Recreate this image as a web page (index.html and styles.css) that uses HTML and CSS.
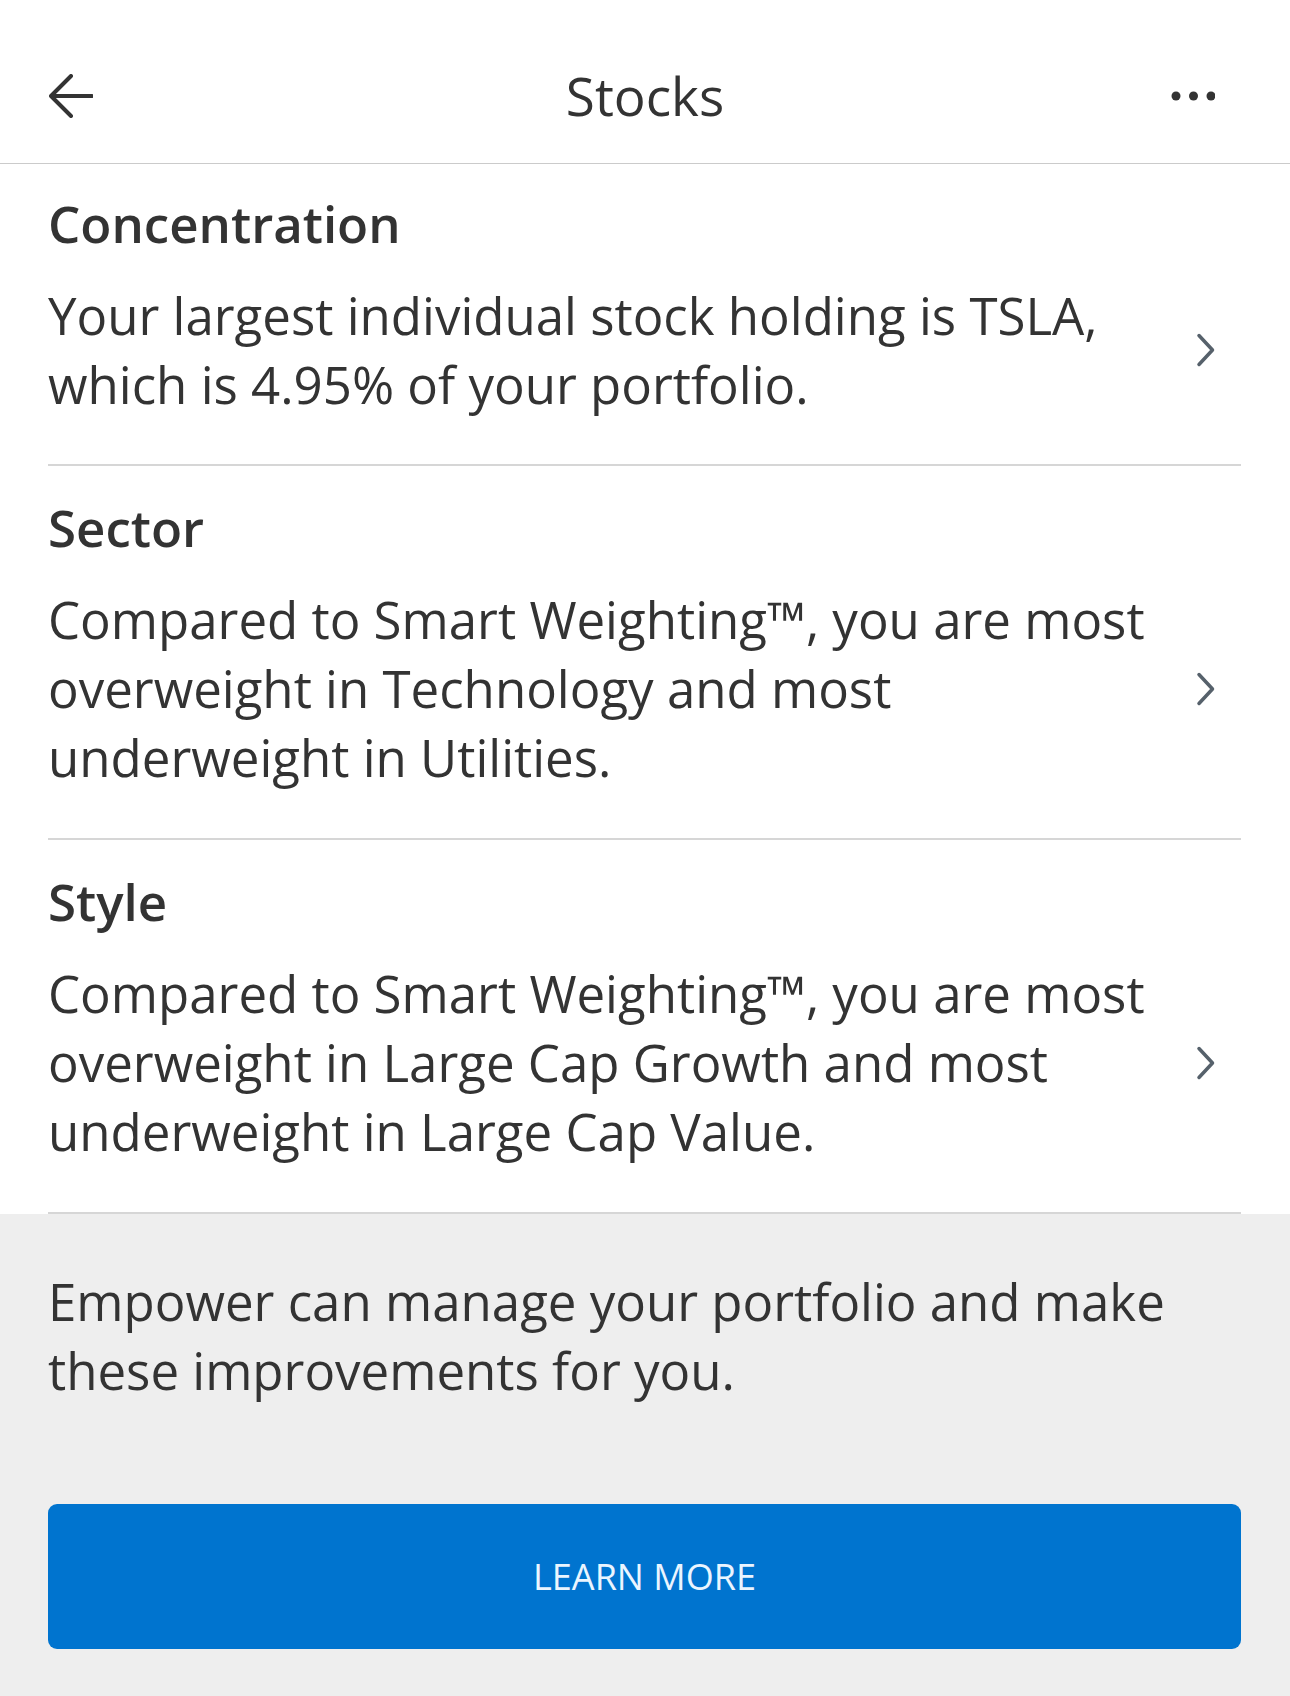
FILE: index.html
```html
<!DOCTYPE html>
<html lang="en">
<head>
<meta charset="utf-8">
<title>Stocks</title>
<link rel="stylesheet" href="styles.css">
</head>
<body>
<div class="page">
  <header class="topbar">
    <div class="topbar-left">
      <svg class="icon-back" width="44" height="44" viewBox="0 0 44 44" aria-hidden="true">
        <path d="M43 22 H2.5 M22 2 L2 22 L22 42" fill="none" stroke="#333" stroke-width="4" stroke-linecap="round" stroke-linejoin="round"/>
      </svg>
    </div>
    <h1 class="title">Stocks</h1>
    <div class="topbar-right">
      <svg class="icon-more" width="44" height="12" viewBox="0 0 44 12" aria-hidden="true">
        <circle cx="5" cy="6" r="4.5" fill="#333"/>
        <circle cx="22.5" cy="6" r="4.5" fill="#333"/>
        <circle cx="40" cy="6" r="4.5" fill="#333"/>
      </svg>
    </div>
  </header>

  <section class="insight insight-first">
    <h2 class="insight-title">Concentration</h2>
    <div class="insight-row">
      <p class="insight-text">Your largest individual stock holding is TSLA, which is 4.95% of your portfolio.</p>
      <svg class="chevron" width="20" height="34" viewBox="0 0 20 34" aria-hidden="true">
        <path d="M3 2.5 L16.5 17 L3 31.5" fill="none" stroke="#56616b" stroke-width="3.5" stroke-linecap="round" stroke-linejoin="round"/>
      </svg>
    </div>
  </section>

  <section class="insight">
    <h2 class="insight-title">Sector</h2>
    <div class="insight-row">
      <p class="insight-text">Compared to Smart Weighting™, you are most overweight in Technology and most underweight in Utilities.</p>
      <svg class="chevron" width="20" height="34" viewBox="0 0 20 34" aria-hidden="true">
        <path d="M3 2.5 L16.5 17 L3 31.5" fill="none" stroke="#56616b" stroke-width="3.5" stroke-linecap="round" stroke-linejoin="round"/>
      </svg>
    </div>
  </section>

  <section class="insight">
    <h2 class="insight-title">Style</h2>
    <div class="insight-row">
      <p class="insight-text">Compared to Smart Weighting™, you are most overweight in Large Cap Growth and most underweight in Large Cap Value.</p>
      <svg class="chevron" width="20" height="34" viewBox="0 0 20 34" aria-hidden="true">
        <path d="M3 2.5 L16.5 17 L3 31.5" fill="none" stroke="#56616b" stroke-width="3.5" stroke-linecap="round" stroke-linejoin="round"/>
      </svg>
    </div>
  </section>

  <footer class="cta">
    <p class="cta-text">Empower can manage your portfolio and make these improvements for you.</p>
    <button class="cta-button" type="button">LEARN MORE</button>
  </footer>
</div>
</body>
</html>
```

FILE: styles.css
```css
* {
  box-sizing: border-box;
}

html, body {
  margin: 0;
  padding: 0;
  background: #ffffff;
}

body {
  font-family: "Open Sans", "Noto Sans", sans-serif;
  color: #333333;
}

.page {
  width: 1290px;
  min-height: 1696px;
  display: flex;
  flex-direction: column;
  background: #eeeeee;
}

.topbar {
  height: 164px;
  padding: 28px 49px 0 49px;
  display: grid;
  grid-template-columns: 1fr auto 1fr;
  align-items: center;
  background: #ffffff;
  border-bottom: 1px solid #cbcbcb;
}

.topbar-left {
  display: flex;
  align-items: center;
}

.topbar-right {
  display: flex;
  justify-content: flex-end;
  align-items: center;
}

.icon-back,
.icon-more,
.chevron {
  display: block;
}

.icon-more {
  margin-right: 26px;
}

.title {
  margin: 0;
  font-size: 53px;
  font-weight: 400;
  line-height: 64px;
  color: #333333;
}

.insight {
  display: flex;
  flex-direction: column;
  background: #ffffff;
  padding: 0 49px 0 48px;
}

.insight-title {
  margin: 0;
  padding-top: 31px;
  font-size: 51px;
  font-weight: 600;
  line-height: 60px;
  color: #333333;
}

.insight-first .insight-title {
  padding-top: 29px;
}

.insight-row {
  display: flex;
  align-items: center;
  gap: 24px;
  margin: 28px 0 0 0;
  padding: 0 25px 46px 0;
  border-bottom: 2px solid #d6d6d6;
}

.insight-first .insight-row {
  padding-bottom: 45px;
}

.insight-text {
  flex: 1;
  margin: 0;
  font-size: 51px;
  line-height: 69px;
  color: #333333;
}

.chevron {
  flex: none;
}

.cta {
  flex: 1;
  padding: 53px 49px 47px 48px;
  display: flex;
  flex-direction: column;
  background: #eeeeee;
}

.cta-text {
  margin: 0;
  font-size: 51px;
  line-height: 69px;
  color: #333333;
}

.cta-button {
  margin-top: 99px;
  height: 145px;
  width: 100%;
  border: none;
  border-radius: 9px;
  background: #0074cf;
  color: #eaf5ff;
  font-family: "Open Sans", "Noto Sans", sans-serif;
  font-size: 36px;
  font-weight: 400;
  display: flex;
  align-items: center;
  justify-content: center;
  padding: 0;
}
```
